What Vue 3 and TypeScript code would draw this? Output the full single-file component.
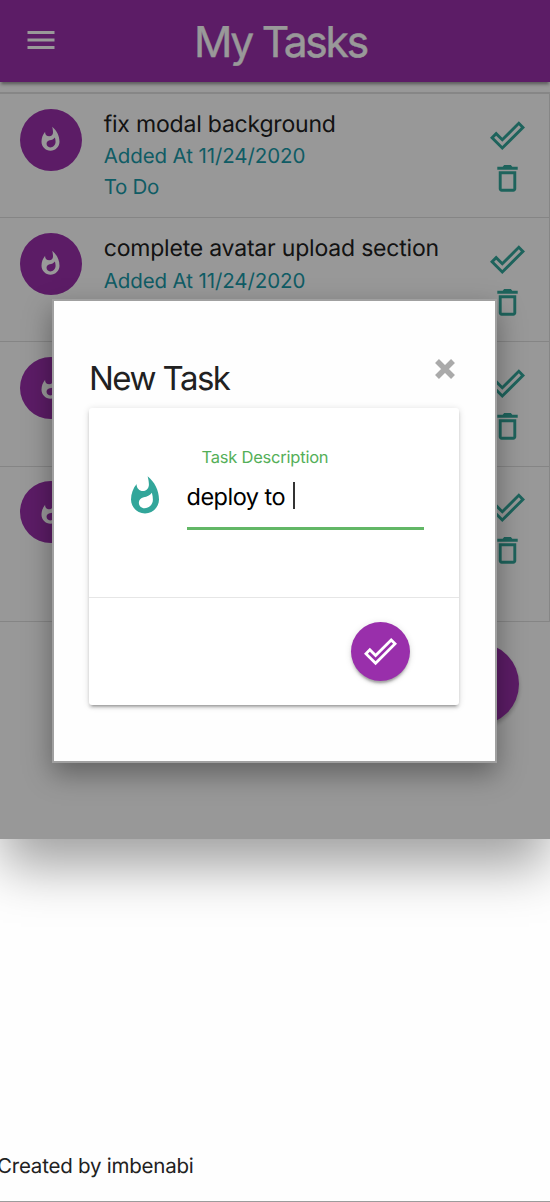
<script setup lang="ts">
import { ref } from 'vue'

interface Task {
  title: string
  added: string
  status: string
}

const tasks: Task[] = [
  { title: 'fix modal background', added: '11/24/2020', status: 'To Do' },
  { title: 'complete avatar upload section', added: '11/24/2020', status: 'To Do' },
  { title: '', added: '', status: '' },
  { title: '', added: '', status: '' },
]

const description = ref('deploy to')

const flame =
  'M13.5.67s.74 2.65.74 4.8c0 2.06-1.35 3.73-3.41 3.73-2.07 0-3.63-1.67-3.63-3.73l.03-.36C5.21 7.51 4 10.62 4 14c0 4.42 3.58 8 8 8s8-3.58 8-8C20 8.61 17.41 3.8 13.5.67zM11.71 19c-1.78 0-3.22-1.4-3.22-3.14 0-1.62 1.05-2.76 2.81-3.12 1.77-.36 3.6-1.21 4.62-2.58.39 1.29.59 2.65.59 4.04 0 2.65-2.15 4.8-4.8 4.8z'
const check =
  'M19.77 5.03l1.4 1.4L8.43 19.17l-5.6-5.6 1.4-1.4 4.2 4.2L19.77 5.03m0-2.83L8.43 13.54l-4.2-4.2L0 13.57 8.43 22 24 6.43 19.77 2.2z'
const trash =
  'M16 9v10H8V9h8m-1.7-6.2h-4.6l-1 1.1H5v2.1h14V3.9h-3.7l-1-1.1zM18 7H6v12c0 1.1.9 2 2 2h8c1.1 0 2-.9 2-2V7z'
</script>

<template>
  <div class="page">
    <div class="app">
      <header class="bar">
        <svg class="menu" viewBox="0 0 24 24"><path d="M3 18h18v-2H3v2zm0-5h18v-2H3v2zm0-7v2h18V6H3z" /></svg>
        <h1>My Tasks</h1>
      </header>

      <ul class="list">
        <li v-for="(task, i) in tasks" :key="i" class="item">
          <div class="avatar">
            <svg viewBox="0 0 24 24"><path :d="flame" /></svg>
          </div>
          <div class="text">
            <template v-if="task.title">
              <p class="title">{{ task.title }}</p>
              <p class="meta">Added At {{ task.added }}</p>
              <p class="meta todo">{{ task.status }}</p>
            </template>
          </div>
          <div class="actions">
            <svg viewBox="0 0 24 24"><path :d="check" /></svg>
            <svg viewBox="0 0 24 24"><path :d="trash" /></svg>
          </div>
        </li>
      </ul>
      <div class="add-row"><div class="add"></div></div>

      <div class="overlay">
        <section class="modal">
          <div class="modal-head">
            <h2>New Task</h2>
            <svg class="close" viewBox="0 0 22 22"><path d="M3 3l16 16M19 3L3 19" /></svg>
          </div>
          <div class="card">
            <div class="card-body">
              <svg class="prefix" viewBox="0 0 24 24"><path :d="flame" /></svg>
              <div class="field">
                <label>Task Description</label>
                <div class="input"><span class="value">{{ description }}</span><i class="caret"></i></div>
              </div>
            </div>
            <div class="card-action">
              <button class="submit">
                <svg viewBox="0 0 24 24"><path :d="check" /></svg>
              </button>
            </div>
          </div>
        </section>
      </div>
    </div>
    <footer class="footer">Created by imbenabi</footer>
  </div>
</template>

<style>
body {
  margin: 0;
  background: #fefefe;
}
</style>

<style scoped>
* {
  box-sizing: border-box;
}
.page {
  display: flex;
  flex-direction: column;
  height: 1202px;
  overflow: hidden;
  border-bottom: 1px solid #9c9c9c;
  font-family: Inter, "Liberation Sans", sans-serif;
  color: #212121;
  text-rendering: geometricPrecision;
}
h1, h2, p, ul {
  margin: 0;
  padding: 0;
  font-weight: 400;
}
svg {
  display: block;
  fill: currentColor;
}
.app {
  position: relative;
  height: 839px;
  flex: none;
}
.bar {
  position: relative;
  display: flex;
  align-items: center;
  height: 82px;
  padding-left: 22.5px;
  background: #992fab;
  color: #fff;
  box-shadow: 0 3px 3px rgba(0, 0, 0, 0.14), 0 1px 7px rgba(0, 0, 0, 0.12), 0 4px 2px -2px rgba(0, 0, 0, 0.2);
}
.menu {
  width: 36px;
  height: 36px;
  margin-top: -2px;
}
h1 {
  margin: 4px 0 0 135.5px;
  font-size: 42.5px;
  line-height: 60px;
  letter-spacing: -2.25px;
  -webkit-text-stroke: 0.4px currentColor;
  white-space: nowrap;
}
.list {
  margin-top: 10px;
  list-style: none;
  border: 1px solid #e0e0e0;
  border-width: 2px 1px 0 0;
}
.item {
  display: flex;
  height: 124.2px;
  padding: 14.6px 0 0 19.7px;
  border-bottom: 1.5px solid #dedede;
}
.item:last-child {
  height: 155.6px;
}
.avatar {
  display: flex;
  align-items: center;
  justify-content: center;
  width: 62px;
  height: 62px;
  flex: none;
  border-radius: 50%;
  background: #992fab;
  color: #fff;
}
.avatar svg {
  width: 27px;
  height: 27px;
}
.text {
  width: 386.5px;
  padding-top: 0.5px;
  margin-left: 22px;
  white-space: nowrap;
}
.title {
  font-size: 23px;
  line-height: 31px;
  letter-spacing: -0.2px;
}
.meta {
  padding-top: 0.4px;
  font-size: 20.5px;
  line-height: 31px;
  letter-spacing: -0.1px;
  color: #1a9aa8;
}
.todo {
  padding-top: 0;
  letter-spacing: -0.3px;
}
.actions {
  display: flex;
  flex-direction: column;
  gap: 8px;
  padding-top: 9px;
  color: #32a69a;
}
.actions svg {
  width: 35px;
  height: 35px;
}
.add-row {
  display: flex;
  justify-content: flex-end;
  padding: 21px 31px 0;
}
.add {
  width: 82px;
  height: 82px;
  border-radius: 50%;
  background: #992fab;
  box-shadow: 0 3px 4px rgba(0, 0, 0, 0.25);
}
.overlay {
  position: absolute;
  inset: 0;
  padding: 299.4px 53.5px 0 52px;
  background: rgba(0, 0, 0, 0.4);
  box-shadow: 0 30px 50px -3px rgba(0, 0, 0, 0.37);
}
.modal {
  height: 463.5px;
  padding: 57px 35.5px 0 35px;
  border: 2px solid #a0a0a0;
  background: #fefefe;
  box-shadow: 0 11px 26px rgba(0, 0, 0, 0.36);
}
.modal-head {
  display: flex;
  justify-content: space-between;
  height: 50px;
}
h2 {
  font-size: 33px;
  line-height: 40px;
  letter-spacing: -1.55px;
  white-space: nowrap;
}
.close {
  width: 22px;
  height: 22px;
  margin: 0 3.5px 0 0;
  fill: none;
  stroke: #aaa;
  stroke-width: 5.5;
}
.card {
  height: 296.5px;
  border-radius: 3px;
  background: #fff;
  box-shadow: 0 3px 3px rgba(0, 0, 0, 0.14), 0 1px 7px rgba(0, 0, 0, 0.14), 0 4px 2px -3px rgba(0, 0, 0, 0.25);
}
.card-body {
  display: flex;
  height: 189.5px;
  padding: 38px 35px 0;
  border-bottom: 1.5px solid #e6e6e6;
}
.prefix {
  width: 42px;
  height: 42px;
  margin-top: 29px;
  color: #32a69a;
}
.field {
  width: 237px;
  margin-left: 20.5px;
}
label {
  display: block;
  margin-left: 15px;
  height: 22px;
  font-size: 16.5px;
  line-height: 22px;
  letter-spacing: -0.22px;
  color: #54af58;
  white-space: nowrap;
}
.input {
  display: flex;
  height: 62px;
  padding-top: 13.5px;
  border-bottom: 3px solid #62b766;
  color: #000;
  white-space: nowrap;
}
.value {
  width: 106.5px;
  font-size: 23.5px;
  line-height: 30px;
  letter-spacing: -0.5px;
}
.caret {
  width: 2px;
  height: 27px;
  background: #333;
}
.card-action {
  display: flex;
  justify-content: flex-end;
  padding: 23.8px 48.8px 0;
}
.submit {
  display: flex;
  align-items: center;
  justify-content: center;
  width: 59.5px;
  height: 59.5px;
  padding: 0;
  border: 0;
  border-radius: 50%;
  background: #992fab;
  color: #fff;
  box-shadow: 0 3px 3px rgba(0, 0, 0, 0.14), 0 1px 7px rgba(0, 0, 0, 0.12), 0 4px 2px -2px rgba(0, 0, 0, 0.2);
}
.submit svg {
  width: 33px;
  height: 33px;
}
.footer {
  margin: 312px 0 0 -3px;
  font-size: 20.5px;
  line-height: 30px;
  letter-spacing: -0.22px;
  white-space: nowrap;
}
</style>
